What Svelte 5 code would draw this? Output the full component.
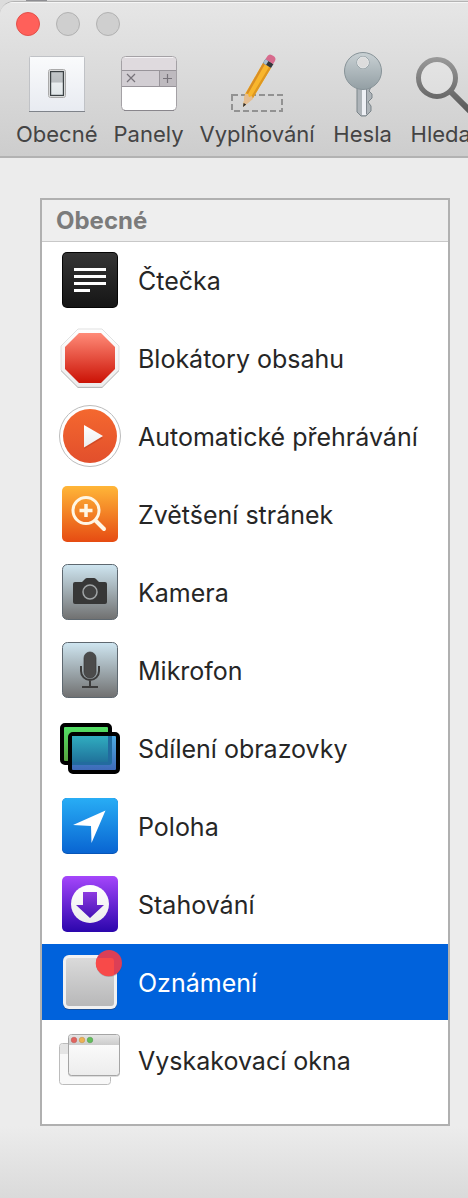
<script>
  const tools = [
    { id: "general", label: "Obecné" },
    { id: "tabs", label: "Panely" },
    { id: "autofill", label: "Vyplňování" },
    { id: "passwords", label: "Hesla" },
    { id: "search", label: "Hledat" },
  ];

  const sites = [
    { id: "reader", label: "Čtečka" },
    { id: "blockers", label: "Blokátory obsahu" },
    { id: "autoplay", label: "Automatické přehrávání" },
    { id: "zoom", label: "Zvětšení stránek" },
    { id: "camera", label: "Kamera" },
    { id: "mic", label: "Mikrofon" },
    { id: "screen", label: "Sdílení obrazovky" },
    { id: "location", label: "Poloha" },
    { id: "downloads", label: "Stahování" },
    { id: "notifications", label: "Oznámení" },
    { id: "popups", label: "Vyskakovací okna" },
  ];

  let selected = $state("notifications");
</script>

<svg class="defs" width="0" height="0" aria-hidden="true">
  <defs>
    <linearGradient id="g-black" x2="0" y2="1"><stop stop-color="#353535" /><stop offset="1" stop-color="#151515" /></linearGradient>
    <linearGradient id="g-red" x2="0" y2="1"><stop stop-color="#ff8b78" /><stop offset="1" stop-color="#cb1205" /></linearGradient>
    <linearGradient id="g-rim" x2="0" y2="1"><stop stop-color="#fff" /><stop offset="1" stop-color="#ececec" /></linearGradient>
    <linearGradient id="g-play" x2="0" y2="1"><stop stop-color="#f4682f" /><stop offset="1" stop-color="#e24f2c" /></linearGradient>
    <linearGradient id="g-orange" x2="0" y2="1"><stop stop-color="#ffb638" /><stop offset="1" stop-color="#e64b12" /></linearGradient>
    <linearGradient id="g-steel" x2="0" y2="1"><stop stop-color="#cfe6f1" /><stop offset="1" stop-color="#707070" /></linearGradient>
    <linearGradient id="g-green" x2="0" y2="1"><stop stop-color="#52e368" /><stop offset="1" stop-color="#57a03c" /></linearGradient>
    <linearGradient id="g-teal" x2="0" y2="1"><stop stop-color="#30adc0" /><stop offset="1" stop-color="#20729b" /></linearGradient>
    <linearGradient id="g-front" x2="0" y2="1"><stop stop-color="#4eaee4" /><stop offset="1" stop-color="#3d66b6" /></linearGradient>
    <linearGradient id="g-blue" x2="0" y2="1"><stop stop-color="#28adf5" /><stop offset="1" stop-color="#0965d2" /></linearGradient>
    <linearGradient id="g-purple" x2="0" y2="1"><stop stop-color="#a546fb" /><stop offset="1" stop-color="#2b06ac" /></linearGradient>
    <linearGradient id="g-arrow" x2="0" y2="1"><stop stop-color="#8d3be0" /><stop offset="1" stop-color="#4511b6" /></linearGradient>
    <linearGradient id="g-grey" x2="0" y2="1"><stop stop-color="#dadada" /><stop offset="1" stop-color="#b8b8b9" /></linearGradient>
    <linearGradient id="g-bar" x2="0" y2="1"><stop stop-color="#e4e4e4" /><stop offset="1" stop-color="#cbcbcb" /></linearGradient>
    <linearGradient id="g-plate" x2="0" y2="1"><stop stop-color="#fafbfc" /><stop offset="1" stop-color="#e8ebf1" /></linearGradient>
    <linearGradient id="g-switch" x2="0" y2="1"><stop stop-color="#c2c6c9" /><stop offset="0.44" stop-color="#b9bdc0" /><stop offset="0.48" stop-color="#e9edef" /><stop offset="1" stop-color="#dfe5e8" /></linearGradient>
    <linearGradient id="g-key" x2="0" y2="1"><stop stop-color="#c9d1d4" /><stop offset="1" stop-color="#939fa4" /></linearGradient>
    <linearGradient id="g-lens" gradientUnits="userSpaceOnUse" x1="0" y1="5" x2="0" y2="62"><stop stop-color="#9a9a9a" /><stop offset="1" stop-color="#555" /></linearGradient>
  </defs>
</svg>

<div class="window">
  <header>
    <div class="lights">
      <button class="light close" aria-label="Zavřít"></button>
      <button class="light" aria-label="Minimalizovat" disabled></button>
      <button class="light" aria-label="Zvětšit" disabled></button>
    </div>
    <nav class="toolbar">
      {#each tools as tool}
        <button class="tool">
          <svg viewBox="0 0 64 64" aria-hidden="true">
            {#if tool.id === "general"}
              <rect x="4.5" y="4.5" width="55" height="55" rx="1" fill="url(#g-plate)" stroke="#c0c2c6" />
              <path d="M4 59.5h56" stroke="#7f838a" />
              <rect x="23.5" y="17.5" width="17" height="28" rx="2" fill="#fff" stroke="#aaa" />
              <rect x="25.5" y="19.5" width="13" height="24" fill="url(#g-switch)" stroke="#3b4144" stroke-width="1.4" />
            {:else if tool.id === "tabs"}
              <rect x="4.5" y="4.5" width="55" height="54" rx="4" fill="#fff" stroke="#a4a1a5" />
              <path d="M5 18V9q0-4 4-4h46q4 0 4 4v9z" fill="#dfdade" />
              <path d="M8 5.5h48" stroke="#f4f1f4" />
              <path d="M5 18h37v16H5z" fill="#d2ced3" />
              <path d="M42 18h17v16H42z" fill="#bebabf" />
              <path d="M5 18.5h54M5 34.5h54M42.5 18v16" fill="none" stroke="#98949a" />
              <path d="M10 22l8 8M18 22l-8 8M46 26.5h9M50.5 22v9" fill="none" stroke="#77737a" stroke-width="1.2" />
              <path d="M7 58.5h50" stroke="#89868c" />
            {:else if tool.id === "autofill"}
              <rect x="7" y="43" width="50" height="16" fill="none" stroke="#929292" stroke-width="2" stroke-dasharray="6 3" />
              <path d="M18 55l2-13 18-31 8 5-18 30z" fill="#f8b62d" />
              <path d="M21 41l17-30 2 1-17 30z" fill="#d98e24" />
              <path d="M26 45l18-30 2 1-18 30z" fill="#de971f" />
              <path d="M18 55l2-13 3 0 1 3 3-1 1 3z" fill="#e4bd91" />
              <path d="M18 55l.6-4 2.6 1.6z" fill="#292929" />
              <path d="M38 11l2.5-4 8 5-2.5 4z" fill="#33373b" />
              <path d="M38 11l2.5-4 3 2-2.5 4z" fill="#a7bdd0" />
              <path d="M40.5 7l2-3q2-3 6 0 3 2 1.5 5l-2 3z" fill="#d76b8d" />
            {:else if tool.id === "passwords"}
              <path d="M26 36v24l4 4h5l5-5v-5l-3-4 4-4v-4l-3-3 2-4v-3z" fill="#aeb4b9" stroke="#7b858a" stroke-linejoin="round" />
              <path d="M31 37h4v26h-4z" fill="#eef0f5" />
              <path d="M35.5 37v25" stroke="#81878f" />
              <path fill-rule="evenodd" d="M32 .5a18.5 18.5 0 1 1 0 37a18.5 18.5 0 1 1 0-37zM32 4.5a6 6 0 1 0 0 12a6 6 0 1 0 0-12z" fill="url(#g-key)" stroke="#879398" />
              <circle cx="32" cy="10.5" r="5.5" fill="none" stroke="#e7eaeb" />
            {:else}
              <circle cx="25" cy="26" r="18.5" fill="#fff" fill-opacity=".2" stroke="url(#g-lens)" stroke-width="5" />
              <path d="M38 39l23 23" stroke="url(#g-lens)" stroke-width="6" />
            {/if}
          </svg>
          <span>{tool.label}</span>
        </button>
      {/each}
    </nav>
  </header>

  <main>
    <section class="list">
      <h2>Obecné</h2>
      <ul>
        {#each sites as site}
          <li>
            <button
              class="row"
              class:selected={selected === site.id}
              aria-pressed={selected === site.id}
              onclick={() => (selected = site.id)}
            >
              <svg viewBox="0 0 64 64" aria-hidden="true">
                {#if site.id === "reader"}
                  <rect x="4" y="4" width="56" height="56" rx="5" fill="#050505" />
                  <rect x="5" y="5" width="54" height="54" rx="4" fill="url(#g-black)" />
                  <path d="M16 20h32v3H16zM16 27h32v3H16zM16 34h32v3H16zM16 41h16v3H16z" fill="#fff" />
                {:else if site.id === "blockers"}
                  <path d="M20 5h24l17 17v23L44 62H20L3 45V22z" fill="#aaa" />
                  <path d="M20 3h24l17 17v24L44 61H20L3 44V20z" fill="url(#g-rim)" stroke="#d4d4d4" stroke-width=".7" />
                  <path d="M21 7h22l14 14v22L43 57H21L7 43V21z" fill="url(#g-red)" />
                {:else if site.id === "autoplay"}
                  <circle cx="32" cy="32" r="30.5" fill="#fff" stroke="#bcbcbc" />
                  <circle cx="32" cy="32" r="27" fill="url(#g-play)" />
                  <path d="M26 22v23l19-11z" fill="#b93c1b" opacity=".5" />
                  <path d="M26 21v22.5L45 32z" fill="url(#g-rim)" />
                {:else if site.id === "zoom"}
                  <rect x="4" y="4" width="56" height="56" rx="5" fill="url(#g-orange)" />
                  <circle cx="28" cy="28.5" r="13" fill="none" stroke="#fff6e4" stroke-width="3" />
                  <path d="M38 39l8 8" stroke="#fff6e4" stroke-width="4" stroke-linecap="round" />
                  <path d="M21.5 28.5h13M28 22v13" stroke="#fff6e4" stroke-width="3.5" />
                {:else if site.id === "camera"}
                  <rect x="4.5" y="4.5" width="55" height="55" rx="5" fill="url(#g-steel)" stroke="#5e6870" />
                  <path d="M17 22h7l3-3q1-1 2-1h7q1 0 2 1l3 3h6q2 0 2 2v18q0 2-2 2H17q-2 0-2-2V24q0-2 2-2z" fill="#373737" />
                  <circle cx="32" cy="32" r="7" fill="#414141" stroke="#a0a4a6" stroke-width="1.5" />
                {:else if site.id === "mic"}
                  <rect x="4.5" y="4.5" width="55" height="55" rx="5" fill="url(#g-steel)" stroke="#5e6870" />
                  <rect x="26" y="14" width="12" height="26" rx="6" fill="#4b4b4b" stroke="#393939" stroke-width=".7" />
                  <path d="M23 28v5a9 9 0 0 0 18 0v-5M32 43v6M24 49h16" fill="none" stroke="#3c3c3c" stroke-width="2" />
                {:else if site.id === "screen"}
                  <rect x="4" y="9" width="48" height="38" rx="3" fill="url(#g-green)" stroke="#000" stroke-width="4" />
                  <rect x="12" y="18" width="48" height="38" rx="3" fill="url(#g-front)" stroke="#000" stroke-width="4" />
                  <path d="M14 20h40v26q0 3-3 3H14z" fill="#226b9f" />
                  <path d="M14 20h36v26H14z" fill="url(#g-teal)" />
                {:else if site.id === "location"}
                  <rect x="4" y="4" width="56" height="56" rx="5" fill="#0756b8" />
                  <rect x="4" y="4" width="56" height="55" rx="5" fill="url(#g-blue)" />
                  <path d="M47.5 16.5L15 31l18 1 .5 17z" fill="#fff" />
                {:else if site.id === "downloads"}
                  <rect x="4" y="4" width="56" height="56" rx="5" fill="url(#g-purple)" />
                  <circle cx="32" cy="32" r="19" fill="url(#g-rim)" />
                  <path d="M25 20h14v13h7L32 46 18 33h7z" fill="url(#g-arrow)" />
                {:else if site.id === "notifications"}
                  <rect x="5" y="6" width="54" height="54" rx="6" fill="#174f9b" />
                  <rect x="5" y="5" width="54" height="54" rx="6" fill="#f1f1f2" />
                  <rect x="8" y="8" width="48" height="48" rx="3" fill="url(#g-grey)" />
                  <circle cx="51" cy="14" r="13" fill="#444" opacity=".25" />
                  <circle cx="51" cy="13" r="13" fill="#dc3f56" />
                  <path d="M38.5 9q0-1 1-1H53q3 0 3 3v14A13 13 0 0 1 38.5 9z" fill="#f84a49" />
                {:else}
                  <rect x="1.5" y="15.5" width="51" height="41" rx="3" fill="#f8f8f8" stroke="#bcbcbc" />
                  <path d="M2 19q0-3 3-3h5v10H2z" fill="#e4e4e4" />
                  <rect x="10.5" y="7.5" width="51" height="41" rx="3" fill="#ccc" stroke="#ddd" />
                  <rect x="10.5" y="6.5" width="51" height="41" rx="3" fill="url(#g-rim)" stroke="#a5a5a5" />
                  <path d="M11 17v-7q0-3 3-3h44q3 0 3 3v7z" fill="url(#g-bar)" />
                  <circle cx="16" cy="12" r="2.8" fill="#e2645f" stroke="#b95752" stroke-width=".5" />
                  <circle cx="24" cy="12" r="2.8" fill="#edb254" stroke="#bb8c44" stroke-width=".5" />
                  <circle cx="32" cy="12" r="2.8" fill="#62bd5b" stroke="#4b9547" stroke-width=".5" />
                {/if}
              </svg>
              <span>{site.label}</span>
            </button>
          </li>
        {/each}
      </ul>
    </section>
  </main>
</div>

<style>
  /* a sliver of the window behind shows above the top edge */
  :global(body) {
    background: linear-gradient(#8e8e92, #8e8e92) 26px 0 / 21px 1px no-repeat #dcdcdc;
    font-family: Inter, "Liberation Sans", sans-serif;
    overflow-x: hidden;
  }
  :global(#app) {
    padding-top: 1px;
  }
  .defs {
    position: absolute;
  }
  button {
    font: inherit;
    border: none;
    background: none;
    padding: 0;
    margin: 0;
  }
  .window {
    border-top: 1px solid #b4b4b4;
    border-radius: 14px 0 0 0;
    background: #ececec;
    overflow: hidden;
  }
  header {
    padding-top: 9px;
    border-top: 1px solid #f6f6f6;
    border-bottom: 2px solid #b2b2b2;
    background: linear-gradient(#e6e6e6, #cdcdcd);
  }
  .lights {
    display: flex;
    gap: 16px;
    padding: 0 16px;
  }
  .light {
    box-sizing: border-box;
    width: 24px;
    height: 24px;
    border: 1px solid #b1b1b1;
    border-radius: 50%;
    background: #cfcfcf;
  }
  .close {
    border-color: #e2504a;
    background: #ff605a;
  }
  .toolbar {
    display: flex;
    gap: 16px;
    padding: 16px 16px 8px;
  }
  .tool {
    display: flex;
    flex: none;
    flex-direction: column;
    align-items: center;
    font-size: 22px;
    line-height: 28px;
    color: #444;
    gap: 4px;
  }
  svg {
    display: block;
    flex: none;
    overflow: visible;
  }
  .tool svg,
  .row svg {
    width: 64px;
    height: 64px;
  }
  main {
    padding: 40px 18px 72px 40px;
    background: linear-gradient(to top, #dadada, #ececec 72px);
  }
  .list {
    border: 2px solid #b0b0b0;
    background: #fff;
    padding-bottom: 26px;
  }
  h2 {
    margin: 0;
    padding: 0 14px;
    border-bottom: 1px solid #c8c8c8;
    background: #eee;
    color: #7b7b7b;
    font-size: 24px;
    font-weight: 700;
    line-height: 41px;
  }
  ul {
    display: flex;
    flex-direction: column;
    gap: 2px;
    margin: 0;
    padding: 0;
    list-style: none;
  }
  .row {
    display: flex;
    align-items: center;
    gap: 16px;
    width: 100%;
    height: 76px;
    padding: 0 16px;
    color: #262626;
    font-size: 25px;
    line-height: 32px;
    text-align: left;
    white-space: nowrap;
  }
  .row span {
    padding-top: 2px;
  }
  .selected {
    background: #0062dc;
    color: #fff;
  }
</style>
